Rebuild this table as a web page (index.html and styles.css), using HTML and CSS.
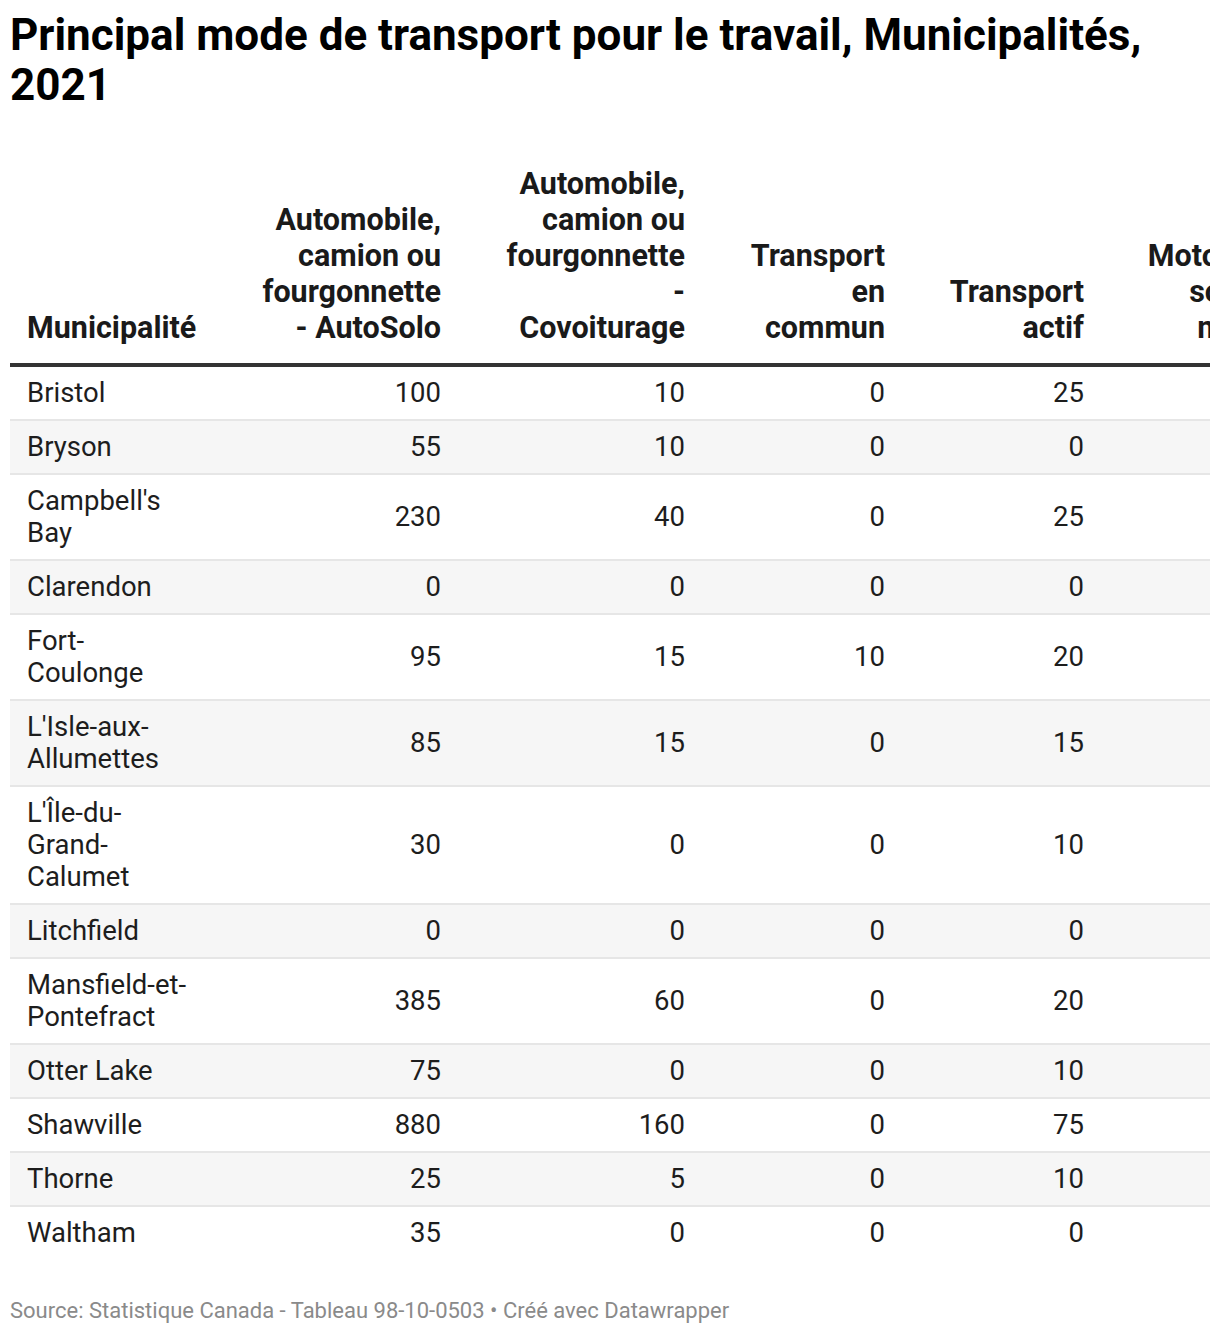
FILE: index.html
```html
<!DOCTYPE html>
<html lang="fr">
<head>
<meta charset="utf-8">
<title>Principal mode de transport pour le travail, Municipalités, 2021</title>
<link rel="stylesheet" href="styles.css">
</head>
<body>
<div class="chart">
  <h1 class="title">Principal mode de transport pour le travail, Municipalités, 2021</h1>
  <div class="table-wrap">
    <table class="data">
      <colgroup>
        <col class="c1"><col class="c2"><col class="c3"><col class="c4"><col class="c5"><col class="c6">
      </colgroup>
      <thead>
        <tr>
          <th class="txt">Municipalité</th>
          <th class="num">Automobile,<br>camion ou<br>fourgonnette<br>- AutoSolo</th>
          <th class="num">Automobile,<br>camion ou<br>fourgonnette<br>-<br>Covoiturage</th>
          <th class="num">Transport<br>en<br>commun</th>
          <th class="num">Transport<br>actif</th>
          <th class="num">Motocyclette,<br>scooter ou<br>mobylette</th>
        </tr>
      </thead>
      <tbody>
        <tr><td class="txt">Bristol</td><td class="num">100</td><td class="num">10</td><td class="num">0</td><td class="num">25</td><td class="num">0</td></tr>
        <tr><td class="txt">Bryson</td><td class="num">55</td><td class="num">10</td><td class="num">0</td><td class="num">0</td><td class="num">0</td></tr>
        <tr><td class="txt">Campbell's<br>Bay</td><td class="num">230</td><td class="num">40</td><td class="num">0</td><td class="num">25</td><td class="num">0</td></tr>
        <tr><td class="txt">Clarendon</td><td class="num">0</td><td class="num">0</td><td class="num">0</td><td class="num">0</td><td class="num">0</td></tr>
        <tr><td class="txt">Fort-<br>Coulonge</td><td class="num">95</td><td class="num">15</td><td class="num">10</td><td class="num">20</td><td class="num">0</td></tr>
        <tr><td class="txt">L'Isle-aux-<br>Allumettes</td><td class="num">85</td><td class="num">15</td><td class="num">0</td><td class="num">15</td><td class="num">0</td></tr>
        <tr><td class="txt">L'Île-du-<br>Grand-<br>Calumet</td><td class="num">30</td><td class="num">0</td><td class="num">0</td><td class="num">10</td><td class="num">0</td></tr>
        <tr><td class="txt">Litchfield</td><td class="num">0</td><td class="num">0</td><td class="num">0</td><td class="num">0</td><td class="num">0</td></tr>
        <tr><td class="txt">Mansfield-et-<br>Pontefract</td><td class="num">385</td><td class="num">60</td><td class="num">0</td><td class="num">20</td><td class="num">0</td></tr>
        <tr><td class="txt">Otter Lake</td><td class="num">75</td><td class="num">0</td><td class="num">0</td><td class="num">10</td><td class="num">0</td></tr>
        <tr><td class="txt">Shawville</td><td class="num">880</td><td class="num">160</td><td class="num">0</td><td class="num">75</td><td class="num">0</td></tr>
        <tr><td class="txt">Thorne</td><td class="num">25</td><td class="num">5</td><td class="num">0</td><td class="num">10</td><td class="num">0</td></tr>
        <tr><td class="txt">Waltham</td><td class="num">35</td><td class="num">0</td><td class="num">0</td><td class="num">0</td><td class="num">0</td></tr>
      </tbody>
    </table>
  </div>
  <div class="footer">Source: Statistique Canada - Tableau 98-10-0503 • Créé avec Datawrapper</div>
</div>
</body>
</html>
```

FILE: styles.css
```css
html, body {
  margin: 0;
  padding: 0;
  background: #ffffff;
}
body {
  font-family: Roboto, "Liberation Sans", Arial, sans-serif;
  color: #1d1d1d;
  overflow: hidden;
}
.chart {
  padding: 10px 10px 0 10px;
}
.title {
  margin: 0;
  font-size: 44px;
  line-height: 50px;
  font-weight: 700;
  color: #000000;
  width: 1200px;
}
.table-wrap {
  margin-top: 46px;
  width: 1200px;
  overflow: hidden;
}
.data {
  border-collapse: collapse;
  table-layout: fixed;
  width: 1325px;
  font-size: 27.5px;
}
.c1 { width: 201px; }
.c2 { width: 230px; }
.c3 { width: 244px; }
.c4 { width: 200px; }
.c5 { width: 199px; }
.c6 { width: 251px; }
.data th {
  font-size: 30.5px;
  font-weight: 700;
  line-height: 36px;
  vertical-align: bottom;
  padding: 10px 0 17px 0;
  border-bottom: 4px solid #333333;
  white-space: nowrap;
  color: #1a1a1a;
}
.data td {
  line-height: 32px;
  padding: 10px 0;
  vertical-align: middle;
  border-bottom: 2px solid #e6e6e6;
  white-space: nowrap;
}
.data tbody tr:nth-child(even) td {
  background: #f6f6f6;
}
.data tbody tr:last-child td {
  border-bottom: none;
}
.txt {
  text-align: left;
  padding-left: 17px !important;
}
.num {
  text-align: right;
}
.footer {
  margin-top: 39px;
  font-size: 22px;
  line-height: 26px;
  color: #8a8a8a;
}
```
